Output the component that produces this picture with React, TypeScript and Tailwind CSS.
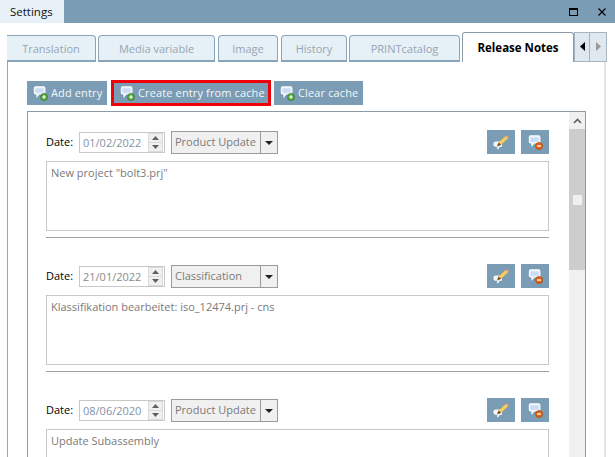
import React from 'react';

const entries = [
  { date: '01/02/2022', dateColor: 'text-[#7f93a8]', type: 'Product Update', text: 'New project "bolt3.prj"' },
  { date: '21/01/2022', dateColor: 'text-[#8a8a8a]', type: 'Classification', text: 'Klassifikation bearbeitet: iso_12474.prj - cns' },
  { date: '08/06/2020', dateColor: 'text-[#7f93a8]', type: 'Product Update', text: 'Update Subassembly' },
];

const tabs = [
  { label: 'Translation', box: 'w-[89px] rounded-tl-none border-l-0' },
  { label: 'Media variable', box: 'ml-[2px] w-[117px]' },
  { label: 'Image', box: 'ml-[3px] w-[60px]' },
  { label: 'History', box: 'ml-[3px] w-[66px]' },
  { label: 'PRINTcatalog', box: 'ml-[2px] w-[111px]' },
];

// speech bubble shared by the toolbar and row icons
const Bubble = () => (
  <>
    <path d="M1.5 2.5 Q1.5 1 3 1 H12 Q13.5 1 13.5 2.5 V7.5 Q13.5 9 12 9 H7 L4.5 12 V9 H3 Q1.5 9 1.5 7.5 Z" fill="#dfeafa" stroke="#ffffff" strokeWidth="1.2" />
    <path d="M3 3 H12 V7.5 H3 Z" fill="#c9dcf4" />
  </>
);

const AddIcon = () => (
  <svg width="15" height="15" viewBox="0 0 17 17" className="shrink-0">
    <Bubble />
    <circle cx="12.5" cy="12.5" r="4" fill="#5aa845" stroke="#2f7a2a" strokeWidth="0.8" />
    <path d="M10.5 12.5 H14.5 M12.5 10.5 V14.5" stroke="#ffffff" strokeWidth="1.3" />
  </svg>
);

const RemoveIcon = () => (
  <svg width="15" height="15" viewBox="0 0 17 17">
    <Bubble />
    <circle cx="12.5" cy="12.5" r="4" fill="#e2620f" stroke="#b4460a" strokeWidth="0.8" />
    <path d="M10.3 12.5 H14.7" stroke="#ffffff" strokeWidth="1.5" />
  </svg>
);

const EditIcon = () => (
  <svg width="17" height="17" viewBox="0 0 18 18">
    <path d="M1 10 Q1 8.5 2.5 8.5 H9 V13 H7 L5 16 V13 H2.5 Q1 13 1 11.5 Z" fill="#eef3fb" stroke="#ffffff" />
    <path d="M4.5 13 L6 9 L13.5 2 L16 4.5 L8.5 11.5 Z" fill="#f5cf66" stroke="#e0ac48" strokeWidth="0.6" />
    <path d="M13.5 2 L16 4.5 L16.8 3.4 L14.8 1.2 Z" fill="#e9a27a" />
    <path d="M4.5 13 L6 9 L8.5 11.5 Z" fill="#6b4a2e" />
  </svg>
);

const ToolButton = ({ label, pad }: { label: string; pad: string }) => (
  <div className={`flex h-[24px] w-full items-center gap-[3px] whitespace-nowrap bg-[#7a9cb4] ${pad}`}>
    <AddIcon />
    <span className="tracking-[0.13px] text-[#f4f7f9]">{label}</span>
  </div>
);

const Spinner = () => (
  <div className="mr-[1px] flex h-[19px] w-[15px] flex-col border border-[#d9d9d9] bg-[#f0f0f0]">
    <div className="flex flex-1 items-center justify-center border-b border-[#d9d9d9]">
      <svg width="7" height="4" viewBox="0 0 7 4"><path d="M3.5 0 L7 4 H0 Z" fill="#606060" /></svg>
    </div>
    <div className="flex flex-1 items-center justify-center">
      <svg width="7" height="4" viewBox="0 0 7 4"><path d="M0 0 H7 L3.5 4 Z" fill="#606060" /></svg>
    </div>
  </div>
);

const Entry = ({ date, dateColor, type, text }: (typeof entries)[number]) => (
  <div className="w-[503px] shrink-0 pt-[18px]">
    <div className="flex h-[24px] items-start">
      <span className="mt-[4px] w-[33px] text-[#000000]">Date:</span>
      <div className="mt-[2px] flex h-[21px] w-[86px] items-center justify-between border border-[#c8c8c8] pl-[3px]">
        <span className={dateColor}>{date}</span>
        <Spinner />
      </div>
      <div className="ml-[6px] mt-[1px] flex h-[23px] w-[107px] border border-[#9b9b9b] bg-[#f0f0f0]">
        <span className="flex-1 whitespace-nowrap pl-[3px] leading-[19px] text-[#7a7a7a]">{type}</span>
        <div className="flex w-[17px] items-center justify-center border-l border-[#9b9b9b]">
          <svg width="8" height="4" viewBox="0 0 8 4"><path d="M0 0 H8 L4 4 Z" fill="#222222" /></svg>
        </div>
      </div>
      <div className="ml-auto flex gap-[6px]">
        <div className="flex h-[24px] w-[28px] items-center justify-center bg-[#7a9cb4]"><EditIcon /></div>
        <div className="flex h-[24px] w-[28px] items-center justify-center bg-[#7a9cb4]"><RemoveIcon /></div>
      </div>
    </div>
    <div className="mt-[7px] h-[70px] border border-[#c8c8c8] px-[4px] pt-[3px] text-[#7a7a7a]">{text}</div>
    <div className="mt-[6px] h-[1px] bg-[#a0a0a0]" />
  </div>
);

export default function App() {
  return (
    <div className="flex h-[457px] w-[615px] flex-col overflow-hidden bg-white font-['Open_Sans','Liberation_Sans',sans-serif] text-[11px] leading-[16px]">
      <div className="flex h-[23px] shrink-0 items-center bg-[#7a9cb4]">
        <div className="flex h-full w-[64px] items-center bg-[#e8f1f8] pl-[10px] text-[11.5px] text-[#111111]">Settings</div>
        <div className="ml-auto flex items-center">
          <div className="mr-[20px] h-[8px] w-[9px] border border-t-2 border-black" />
          <svg width="8" height="8" viewBox="0 0 8 8" className="mr-[9px]"><path d="M0.5 0.5 L7.5 7.5 M7.5 0.5 L0.5 7.5" stroke="#000000" strokeWidth="1.2" /></svg>
        </div>
      </div>

      <div className="flex h-[39px] shrink-0 items-end pl-[7px]">
        {tabs.map((t) => (
          <div key={t.label} className={`flex h-[27px] items-center justify-center rounded-t-[4px] border border-b-2 border-[#8aa5b9] bg-[#e6f0f7] pt-[2px] text-[#97a6b3] ${t.box}`}>
            {t.label}
          </div>
        ))}
        <div className="ml-[2px] flex h-[30px] w-[112px] items-center justify-center rounded-t-[3px] border border-b-0 border-[#8d9aa5] text-[11.5px] font-bold text-[#000000]">Release Notes</div>
        <div className="flex h-[30px]">
          <div className="flex w-[16px] items-center justify-center border border-[#a6b4bf] bg-[#dfe8ee] pb-[1px]">
            <svg width="5" height="9" viewBox="0 0 5 9"><path d="M5 0 V9 L0 4.5 Z" fill="#000000" /></svg>
          </div>
          <div className="flex w-[17px] items-center justify-center border border-l-0 border-[#a6b4bf] bg-[#dfe8ee] pb-[1px]">
            <svg width="5" height="9" viewBox="0 0 5 9"><path d="M0 0 V9 L5 4.5 Z" fill="#9a9a9a" /></svg>
          </div>
        </div>
      </div>

      <div className="ml-[7px] mr-[9px] flex min-h-0 flex-1 flex-col border-r-2 border-l border-l-[#9aa5ae] border-r-[#e4e4e4] pl-[19px] pr-[18px]">
        <div className="mt-[19px] flex h-[24px] shrink-0 items-center">
          <div className="w-[80px]"><ToolButton label="Add entry" pad="pl-[6px]" /></div>
          <div className="relative ml-[5px] w-[158px]">
            <ToolButton label="Create entry from cache" pad="pl-[8px]" />
            <div className="absolute -inset-[1px] border-[3px] border-[#f00008]" />
          </div>
          <div className="ml-[4px] w-[89px]"><ToolButton label="Clear cache" pad="pl-[6px]" /></div>
        </div>

        <div className="mt-[6px] flex min-h-0 flex-1 overflow-hidden border border-b-0 border-[#8f9aa3]">
          <div className="flex min-w-0 flex-1 flex-col overflow-hidden pl-[18px]">
            {entries.map((e) => (
              <div key={e.date} className="pb-[8px] last:pb-0">
                <Entry {...e} />
              </div>
            ))}
          </div>
          <div className="flex w-[16px] shrink-0 flex-col bg-[#f0f0f0]">
            <div className="flex h-[17px] items-center justify-center">
              <svg width="9" height="6" viewBox="0 0 9 6"><path d="M1 5 L4.5 1.5 L8 5" fill="none" stroke="#606060" strokeWidth="1.6" /></svg>
            </div>
            <div className="flex h-[141px] items-center justify-center bg-[#cdcdcd]">
              <div className="h-[10px] w-[9px] bg-[#f0f0f0]" />
            </div>
          </div>
        </div>
      </div>
    </div>
  );
}
